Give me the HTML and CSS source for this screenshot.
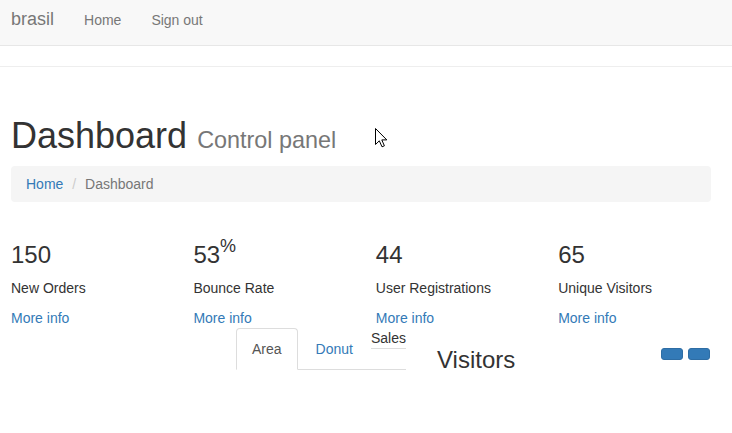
FILE: index.html
```html
<!DOCTYPE html>
<html lang="en">
<head>
<meta charset="utf-8">
<title>brasil | Dashboard</title>
<link rel="stylesheet" href="styles.css">
</head>
<body>
<nav class="navbar">
  <a class="brand" href="#">brasil</a>
  <a class="nav-link" href="#">Home</a>
  <a class="nav-link" href="#">Sign out</a>
</nav>
<hr class="rule">
<main class="content">
  <h1 class="page-title">Dashboard <small>Control panel</small></h1>
  <ol class="breadcrumb">
    <li><a href="#">Home</a></li>
    <li class="active">Dashboard</li>
  </ol>
  <section class="stats">
    <div class="stat">
      <h3>150</h3>
      <p>New Orders</p>
      <a href="#">More info</a>
    </div>
    <div class="stat">
      <h3>53<sup>%</sup></h3>
      <p>Bounce Rate</p>
      <a href="#">More info</a>
    </div>
    <div class="stat">
      <h3>44</h3>
      <p>User Registrations</p>
      <a href="#">More info</a>
    </div>
    <div class="stat">
      <h3>65</h3>
      <p>Unique Visitors</p>
      <a href="#">More info</a>
    </div>
  </section>
  <section class="lower">
    <ul class="tabs">
      <li class="tab active"><a href="#">Area</a></li>
      <li class="tab"><a href="#">Donut</a></li>
      <li class="tab-header">Sales</li>
    </ul>
    <div class="visitors">
      <h3>Visitors</h3>
      <div class="tools">
        <span class="btn"></span>
        <span class="btn"></span>
      </div>
    </div>
  </section>
</main>
<svg class="cursor" width="13" height="20" viewBox="0 0 13 20" aria-hidden="true">
  <path d="M0.5 0.5 L0.5 16.5 L4.3 12.8 L7 18.8 L9.4 17.8 L6.8 11.9 L11.8 11.9 Z" fill="#fff" stroke="#000" stroke-width="1" stroke-linejoin="miter"/>
</svg>
</body>
</html>
```
FILE: styles.css
```css
* { box-sizing: border-box; }

html, body {
  margin: 0;
  padding: 0;
  background: #fff;
}

body {
  font-family: "Liberation Sans", Arial, Helvetica, sans-serif;
  font-size: 14px;
  line-height: 20px;
  color: #333;
  position: relative;
  overflow: hidden;
  height: 433px;
}

a { color: #337ab7; text-decoration: none; }

.navbar {
  display: flex;
  align-items: baseline;
  height: 46px;
  padding: 9px 0 0 11px;
  background: #f8f8f8;
  border-bottom: 1px solid #e7e7e7;
}

.brand {
  font-size: 18px;
  line-height: 20px;
  color: #777;
  margin-right: 30px;
}

.nav-link {
  color: #777;
  line-height: 20px;
  margin-right: 30px;
}

.rule {
  margin: 20px 0 0;
  border: 0;
  border-top: 1px solid #eee;
  height: 0;
}

.content {
  padding: 49px 21px 0 11px;
}

.page-title {
  margin: 0 0 10px;
  font-size: 36px;
  font-weight: 500;
  line-height: 40px;
  color: #333;
}

.page-title small {
  font-size: 65%;
  font-weight: 400;
  line-height: 1;
  color: #777;
}

.breadcrumb {
  margin: 0;
  padding: 8px 15px;
  list-style: none;
  background: #f5f5f5;
  border-radius: 4px;
}

.breadcrumb li { display: inline-block; }

.breadcrumb li + li::before {
  content: "/\00a0";
  padding: 0 5px;
  color: #ccc;
}

.breadcrumb .active { color: #777; }

.stats {
  display: grid;
  grid-template-columns: 182.4px 182.4px 182.4px 1fr;
  padding-top: 40px;
}

.stat h3 {
  margin: 0 0 10px;
  font-size: 24px;
  font-weight: 500;
  line-height: 26.4px;
}

.stat h3 sup {
  font-size: 75%;
  line-height: 0;
  position: relative;
  vertical-align: baseline;
  top: -0.62em;
}

.stat p { margin: 0 0 10px; }

.stat a { display: block; }

.lower {
  display: flex;
  align-items: flex-start;
  padding-left: 225px;
}

.tabs {
  display: flex;
  align-items: flex-start;
  width: 170px;
  margin: 0;
  padding: 0;
  list-style: none;
  border-bottom: 1px solid #ddd;
}

.tab { margin-bottom: -1px; }

.tab a {
  display: block;
  padding: 10px 15px;
  margin-right: 2px;
  border: 1px solid transparent;
  border-radius: 4px 4px 0 0;
}

.tab.active a {
  color: #555;
  background: #fff;
  border-color: #ddd #ddd transparent;
}

.tab-header {
  color: #333;
  border-bottom: 1px solid #ddd;
}

.visitors {
  flex: 1;
  display: flex;
  justify-content: space-between;
  align-items: flex-start;
  margin-left: 31px;
}

.visitors h3 {
  margin: 19px 0 0;
  font-size: 24px;
  font-weight: 500;
  line-height: 26.4px;
}

.tools {
  display: flex;
  gap: 5px;
  margin: 20px 1px 0 0;
}

.btn {
  display: block;
  width: 22px;
  height: 12px;
  background: #337ab7;
  border: 1px solid #2e6da4;
  border-radius: 3px;
}

.cursor {
  position: absolute;
  left: 375px;
  top: 128px;
}
```
